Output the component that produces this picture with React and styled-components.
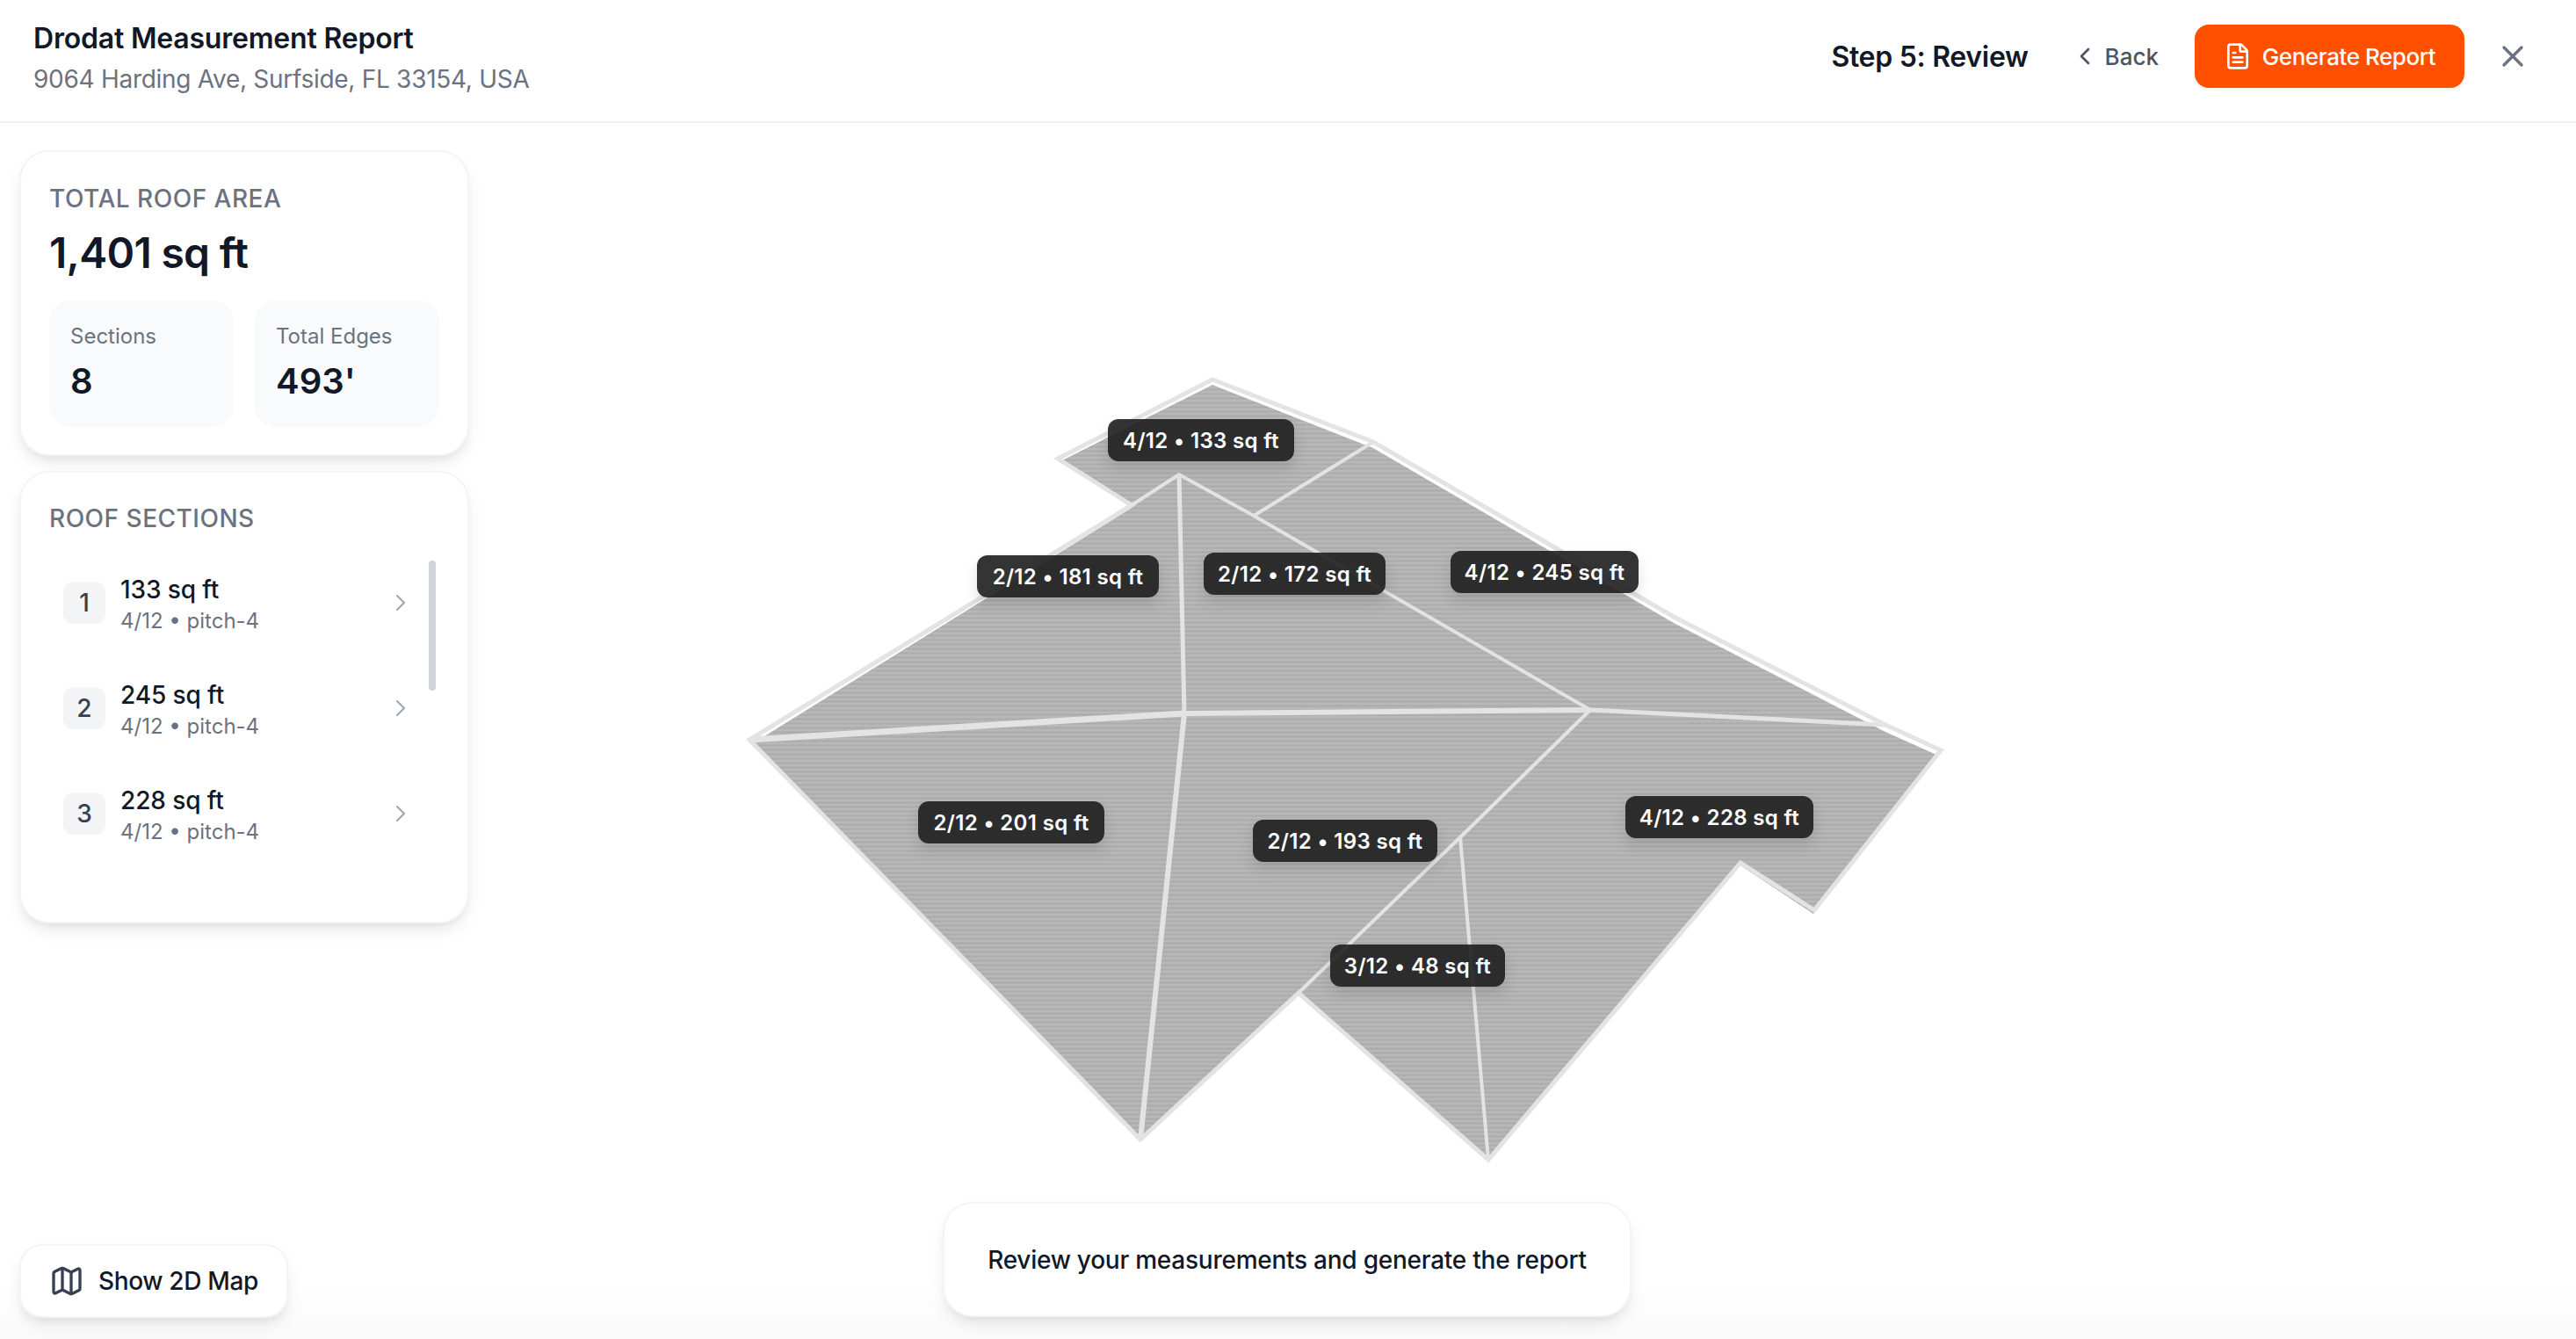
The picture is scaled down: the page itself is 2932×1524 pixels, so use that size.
import React from "react";
import styled, { createGlobalStyle } from "styled-components";
import { ChevronLeft, ChevronRight, FileText, Map as MapIcon, X } from "lucide-react";

const Global = createGlobalStyle`
  html, body { margin: 0; padding: 0; background: #fff; }
  body { font-family: Inter, "Liberation Sans", sans-serif; color: #111827; -webkit-font-smoothing: antialiased; }
  * { box-sizing: border-box; }
`;

const Page = styled.div`
  width: 2932px;
  height: 1524px;
  display: flex;
  flex-direction: column;
  overflow: hidden;
`;

const Header = styled.header`
  flex: none;
  height: 140px;
  border-bottom: 2px solid #f0f0f0;
  padding: 0 52px 0 38px;
  display: flex;
  align-items: center;
  justify-content: space-between;
`;

const TitleBlock = styled.div`
  display: flex;
  flex-direction: column;
  gap: 6px;
  padding-bottom: 4px;
`;

const Title = styled.h1`
  margin: 0;
  font-size: 32px;
  line-height: 40px;
  font-weight: 600;
  letter-spacing: -0.2px;
  color: #111827;
`;

const Address = styled.p`
  margin: 0;
  font-size: 28px;
  line-height: 40px;
  letter-spacing: -0.28px;
  color: #6b7280;
`;

const Actions = styled.div`
  align-self: flex-start;
  margin-top: 28px;
  height: 72px;
  display: flex;
  align-items: center;
`;

const StepName = styled.span`
  font-size: 32px;
  font-weight: 600;
  letter-spacing: -0.3px;
  color: #111827;
  margin-right: 48px;
`;

const BackButton = styled.button`
  border: 0;
  background: none;
  padding: 0;
  display: flex;
  align-items: center;
  gap: 7px;
  font: 500 26px Inter, sans-serif;
  color: #4b5563;
  margin-right: 41px;
`;

const GenerateButton = styled.button`
  width: 307px;
  height: 72px;
  border: 0;
  border-radius: 16px;
  background: #ff5000;
  color: #fff;
  display: flex;
  align-items: center;
  justify-content: center;
  gap: 12px;
  font: 500 26px Inter, sans-serif;
  letter-spacing: -0.45px;
  box-shadow: 0 2px 4px rgba(0, 0, 0, 0.06);
  margin-right: 35px;
`;

const CloseButton = styled.button`
  border: 0;
  background: none;
  padding: 0;
  display: flex;
  color: #6b7280;
`;

const Main = styled.main`
  flex: 1;
  min-height: 0;
  position: relative;
  display: flex;
  background: linear-gradient(to bottom, #fff calc(100% - 70px), #fafafa 100%);
`;

const Sidebar = styled.aside`
  flex: none;
  width: 556px;
  padding: 31px 22px 24px;
  display: flex;
  flex-direction: column;
  gap: 17px;
  position: relative;
  z-index: 2;
`;

const Card = styled.section`
  background: #fff;
  border: 2px solid #f3f4f6;
  border-radius: 34px;
  padding: 32px;
  height: ${(p) => p.$height}px;
  position: relative;
  box-shadow: 0 10px 20px -4px rgba(0, 0, 0, 0.1), 0 6px 12px -6px rgba(0, 0, 0, 0.08);
`;

const Eyebrow = styled.div`
  font-size: 28px;
  line-height: 40px;
  font-weight: 500;
  color: #6b7280;
  letter-spacing: 0.5px;
  margin-top: ${(p) => p.$nudge || 0}px;
`;

const TotalValue = styled.div`
  font-size: 48px;
  line-height: 60px;
  font-weight: 600;
  letter-spacing: -0.7px;
  color: #111827;
  margin: 12px 0 24px;
`;

const StatGrid = styled.div`
  display: grid;
  grid-template-columns: 1fr 1fr;
  gap: 24px;
`;

const Stat = styled.div`
  height: 144px;
  background: #f9fafb;
  border-radius: 24px;
  padding: 25px 24px;
`;

const StatLabel = styled.div`
  font-size: 24px;
  line-height: 32px;
  color: #6b7280;
`;

const StatValue = styled.div`
  margin-top: 11px;
  font-size: 40px;
  line-height: 48px;
  font-weight: 600;
  color: #111827;
`;

const SectionList = styled.div`
  margin-top: 16px;
  display: flex;
  flex-direction: column;
  padding-right: 28px;
`;

const SectionRow = styled.div`
  height: 120px;
  padding: 0 0 0 16px;
  display: flex;
  align-items: center;
  gap: 17px;
`;

const SectionBadge = styled.div`
  flex: none;
  width: 48px;
  height: 48px;
  border-radius: 12px;
  background: #f3f4f6;
  color: #374151;
  font-size: 28px;
  font-weight: 500;
  display: flex;
  align-items: center;
  justify-content: center;
`;

const SectionText = styled.div`
  flex: 1;
  display: flex;
  flex-direction: column;
  padding-top: 5px;
`;

const SectionArea = styled.div`
  font-size: 28px;
  line-height: 36px;
  font-weight: 500;
  letter-spacing: -0.1px;
  color: #111827;
`;

const SectionMeta = styled.div`
  font-size: 24px;
  line-height: 36px;
  color: #6b7280;
`;

const Chevron = styled(ChevronRight)`
  flex: none;
  color: #9ca3af;
`;

const ScrollThumb = styled.div`
  position: absolute;
  left: 464px;
  top: 100px;
  width: 8px;
  height: 148px;
  border-radius: 4px;
  background: #d1d5db;
`;

const MapToggle = styled.button`
  margin-top: auto;
  align-self: flex-start;
  width: 306px;
  height: 84px;
  border: 2px solid #f3f4f6;
  border-radius: 26px;
  background: #fff;
  padding: 0 0 0 32px;
  display: flex;
  align-items: center;
  gap: 16px;
  font: 500 28px Inter, sans-serif;
  letter-spacing: -0.35px;
  color: #111827;
  box-shadow: 0 10px 20px -4px rgba(0, 0, 0, 0.1), 0 6px 12px -6px rgba(0, 0, 0, 0.08);
`;

const MapGlyph = styled(MapIcon)`
  flex: none;
  color: #374151;
`;

const Canvas = styled.div`
  flex: 1;
  position: relative;
`;

const RoofSvg = styled.svg`
  display: block;
  width: 100%;
  height: 100%;
`;

const RoofLabel = styled.div`
  position: absolute;
  left: ${(p) => p.$x - 556}px;
  top: ${(p) => p.$y - 140}px;
  width: ${(p) => p.$w}px;
  height: 48px;
  border-radius: 12px;
  background: rgba(30, 30, 30, 0.9);
  color: #fff;
  font-size: 24px;
  font-weight: 600;
  letter-spacing: 0.35px;
  display: flex;
  align-items: center;
  justify-content: center;
  white-space: nowrap;
  box-shadow: 0 8px 16px rgba(0, 0, 0, 0.12);
`;

const Prompt = styled.div`
  position: absolute;
  left: 50%;
  bottom: 25px;
  margin-left: -1px;
  transform: translateX(-50%);
  width: 784px;
  height: 131px;
  border: 2px solid #f3f4f6;
  border-radius: 34px;
  background: #fff;
  display: flex;
  align-items: center;
  justify-content: center;
  font-size: 28px;
  font-weight: 500;
  letter-spacing: -0.25px;
  color: #111827;
  box-shadow: 0 10px 20px -4px rgba(0, 0, 0, 0.1), 0 6px 12px -6px rgba(0, 0, 0, 0.08);
`;

const pts = (a) => a.map((p) => p.join(",")).join(" ");

const fillOutline = [
  [1380, 438], [1563, 510], [1905, 709], [2146, 833], [2204, 859], [2064, 1040], [1981, 985],
  [1694, 1322], [1478, 1133], [1298, 1299], [856, 845], [870, 838], [1288, 578], [1209, 524],
];

const outline = [
  [1380, 432], [1563, 503], [1905, 702], [2146, 825], [2209, 854], [2065, 1036], [1981, 982],
  [1694, 1320], [1478, 1130], [1298, 1297], [853, 842], [1288, 575], [1204, 522],
];

const ridges = [
  { d: [[853, 842], [1348, 812]], w: 7 },
  { d: [[1348, 812], [1810, 808]], w: 6 },
  { d: [[1810, 808], [2146, 825]], w: 5 },
  { d: [[1342, 540], [1348, 812]], w: 5 },
  { d: [[1348, 812], [1298, 1297]], w: 6 },
  { d: [[1288, 575], [1342, 540], [1427, 587], [1810, 808]], w: 4 },
  { d: [[1563, 503], [1427, 587]], w: 4 },
  { d: [[1810, 808], [1662, 953], [1478, 1130]], w: 4 },
  { d: [[1662, 953], [1694, 1320]], w: 4 },
];

const labels = [
  { x: 1261, y: 477, w: 212, t: "4/12 • 133 sq ft" },
  { x: 1112, y: 632, w: 207, t: "2/12 • 181 sq ft" },
  { x: 1370, y: 629, w: 207, t: "2/12 • 172 sq ft" },
  { x: 1651, y: 627, w: 214, t: "4/12 • 245 sq ft" },
  { x: 1850, y: 906, w: 214, t: "4/12 • 228 sq ft" },
  { x: 1045, y: 912, w: 212, t: "2/12 • 201 sq ft" },
  { x: 1426, y: 933, w: 210, t: "2/12 • 193 sq ft" },
  { x: 1514, y: 1075, w: 199, t: "3/12 • 48 sq ft" },
];

const sections = [
  { n: 1, area: "133 sq ft" },
  { n: 2, area: "245 sq ft" },
  { n: 3, area: "228 sq ft" },
];

export default function App() {
  return (
    <Page>
      <Global />
      <Header>
        <TitleBlock>
          <Title>Drodat Measurement Report</Title>
          <Address>9064 Harding Ave, Surfside, FL 33154, USA</Address>
        </TitleBlock>
        <Actions>
          <StepName>Step 5: Review</StepName>
          <BackButton>
            <ChevronLeft size={32} />
            Back
          </BackButton>
          <GenerateButton>
            <FileText size={32} />
            Generate Report
          </GenerateButton>
          <CloseButton aria-label="Close">
            <X size={40} />
          </CloseButton>
        </Actions>
      </Header>
      <Main>
        <Sidebar>
          <Card $height={348}>
            <Eyebrow $nudge={1}>TOTAL ROOF AREA</Eyebrow>
            <TotalValue>1,401 sq ft</TotalValue>
            <StatGrid>
              <Stat>
                <StatLabel>Sections</StatLabel>
                <StatValue>8</StatValue>
              </Stat>
              <Stat>
                <StatLabel>Total Edges</StatLabel>
                <StatValue>493'</StatValue>
              </Stat>
            </StatGrid>
          </Card>
          <Card $height={515}>
            <Eyebrow>ROOF SECTIONS</Eyebrow>
            <SectionList>
              {sections.map((s) => (
                <SectionRow key={s.n}>
                  <SectionBadge>{s.n}</SectionBadge>
                  <SectionText>
                    <SectionArea>{s.area}</SectionArea>
                    <SectionMeta>4/12 • pitch-4</SectionMeta>
                  </SectionText>
                  <Chevron size={32} strokeWidth={1.5} />
                </SectionRow>
              ))}
            </SectionList>
            <ScrollThumb />
          </Card>
          <MapToggle>
            <MapGlyph size={40} />
            Show 2D Map
          </MapToggle>
        </Sidebar>
        <Canvas>
          <RoofSvg viewBox="556 140 2376 1384">
            <defs>
              <pattern id="shingle" width="5" height="5" patternUnits="userSpaceOnUse">
                <rect width="5" height="5" fill="#b8b8b8" />
                <rect y="2" width="5" height="1" fill="#b0b0b0" />
                <rect y="3" width="5" height="1" fill="#acacac" />
                <rect y="4" width="5" height="1" fill="#b0b0b0" />
              </pattern>
            </defs>
            <polygon points={pts(fillOutline)} fill="url(#shingle)" />
            <polygon points={pts(outline)} fill="none" stroke="#e3e3e3" strokeWidth="5" strokeLinejoin="miter" />
            {ridges.map((r, i) => (
              <polyline key={i} points={pts(r.d)} fill="none" stroke="#e3e3e3" strokeWidth={r.w} />
            ))}
          </RoofSvg>
          {labels.map((l) => (
            <RoofLabel key={l.t} $x={l.x} $y={l.y} $w={l.w}>
              {l.t}
            </RoofLabel>
          ))}
        </Canvas>
        <Prompt>Review your measurements and generate the report</Prompt>
      </Main>
    </Page>
  );
}
